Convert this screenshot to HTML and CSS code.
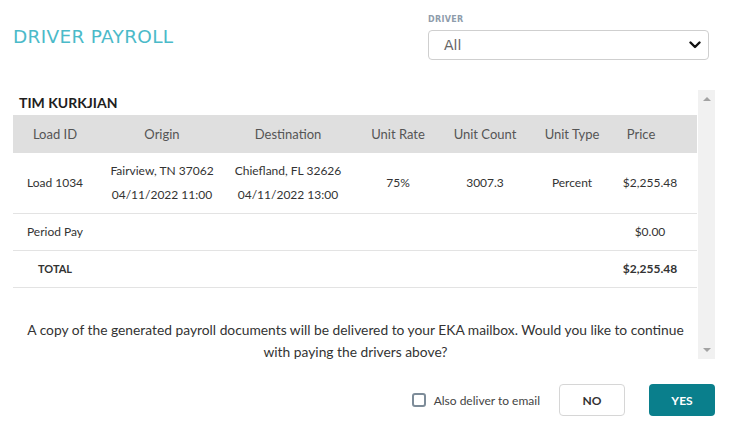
FILE: index.html
```html
<!DOCTYPE html>
<html>
<head>
    <title>Driver Payroll</title>
    <link rel="stylesheet" href="styles.css">
</head>
<body>
    <!-- Top bar -->
    <div class="topbar">
        <h1 class="title">DRIVER PAYROLL</h1>
        <div class="filter">
            <div class="filter-label">DRIVER</div>
            <div class="select">
                <span>All</span>
                <svg width="12" height="8" viewBox="0 0 12 8"><path d="M1.5 1.5 L6 6 L10.5 1.5" fill="none" stroke="#111" stroke-width="2.4" stroke-linecap="round" stroke-linejoin="round"/></svg>
            </div>
        </div>
    </div>

    <!-- Payroll panel -->
    <div class="panel">
        <div class="panel-content">
            <div class="driver-name">TIM KURKJIAN</div>
            <table class="payroll">
                <colgroup>
                    <col style="width:84px">
                    <col style="width:130px">
                    <col style="width:122px">
                    <col style="width:98px">
                    <col style="width:76px">
                    <col style="width:98px">
                    <col style="width:76px">
                </colgroup>
                <thead>
                    <tr>
                        <th>Load ID</th>
                        <th>Origin</th>
                        <th>Destination</th>
                        <th>Unit Rate</th>
                        <th>Unit Count</th>
                        <th>Unit Type</th>
                        <th class="price">Price</th>
                    </tr>
                </thead>
                <tbody>
                    <tr class="load-row">
                        <td>Load 1034</td>
                        <td>Fairview, TN 37062<br>04/11/2022 11:00</td>
                        <td>Chiefland, FL 32626<br>04/11/2022 13:00</td>
                        <td>75%</td>
                        <td>3007.3</td>
                        <td>Percent</td>
                        <td class="price">$2,255.48</td>
                    </tr>
                    <tr class="sum-row">
                        <td>Period Pay</td>
                        <td></td><td></td><td></td><td></td><td></td>
                        <td class="price">$0.00</td>
                    </tr>
                    <tr class="sum-row total">
                        <td>TOTAL</td>
                        <td></td><td></td><td></td><td></td><td></td>
                        <td class="price">$2,255.48</td>
                    </tr>
                </tbody>
            </table>
            <p class="message">A copy of the generated payroll documents will be delivered to your EKA mailbox. Would you like to continue with paying the drivers above?</p>
        </div>
        <div class="scrollbar">
            <span class="arrow-up"></span>
            <span class="arrow-down"></span>
        </div>
    </div>

    <!-- Actions -->
    <div class="actions">
        <label class="email-option">
            <span class="checkbox"></span>
            Also deliver to email
        </label>
        <button class="btn btn-no">NO</button>
        <button class="btn btn-yes">YES</button>
    </div>
</body>
</html>
```

FILE: styles.css
```css
body {
    font-family: Lato, "Liberation Sans", sans-serif;
    margin: 0;
    padding: 0;
    background-color: white;
    color: #333;
}
.topbar {
    display: flex;
    justify-content: space-between;
    padding: 15px 27px 0 13px;
    height: 75px;
}
.title {
    font-family: "DejaVu Sans", sans-serif;
    font-weight: normal;
    font-size: 18.5px;
    color: #4bbac9;
    margin: 11px 0 0 0;
    letter-spacing: 0.3px;
}
.filter {
    width: 281px;
}
.filter-label {
    font-family: "DejaVu Sans", sans-serif;
    font-size: 8px;
    font-weight: bold;
    color: #8e9cab;
    letter-spacing: 0.3px;
    height: 15px;
}
.select {
    display: flex;
    justify-content: space-between;
    align-items: center;
    height: 28px;
    border: 1px solid #cfcfcf;
    border-radius: 4px;
    padding: 0 7px 0 15px;
    font-family: "DejaVu Sans", sans-serif;
    font-size: 14px;
    color: #666;
}
/* Panel with table */
.panel {
    display: flex;
    margin-left: 13px;
    width: 702px;
    height: 269px;
}
.panel-content {
    flex: 1;
}
.driver-name {
    font-weight: bold;
    font-size: 14px;
    color: #1e1e1e;
    padding: 4px 6px 0;
    height: 21px;
}
.payroll {
    width: 684px;
    border-collapse: collapse;
    table-layout: fixed;
    font-size: 12px;
}
.payroll th {
    background-color: #dfdfdf;
    font-weight: normal;
    font-size: 13px;
    color: #555;
    height: 38px;
    padding: 0;
}
.payroll th.price {
    padding-right: 36px;
}
.payroll td {
    text-align: center;
    padding: 0;
    border-bottom: 1px solid #e3e3e3;
}
.payroll td.price {
    padding-right: 18px;
}
.load-row td {
    padding-top: 6px;
    padding-bottom: 6px;
    line-height: 24px;
}
.sum-row td {
    height: 34px;
    padding-bottom: 2px;
}
.total td {
    font-weight: bold;
    font-size: 11px;
}
.total td.price {
    font-size: 12px;
}
.message {
    margin: 0;
    padding: 31px 0 0;
    text-align: center;
    font-size: 13.8px;
    line-height: 22px;
    color: #333;
}
.scrollbar {
    width: 17px;
    background-color: #f1f1f1;
    display: flex;
    flex-direction: column;
    justify-content: space-between;
    align-items: center;
    padding: 7px 0;
    box-sizing: border-box;
}
.arrow-up, .arrow-down {
    width: 0;
    height: 0;
    border-left: 4px solid transparent;
    border-right: 4px solid transparent;
}
.arrow-up {
    border-bottom: 4px solid #a3a3a3;
}
.arrow-down {
    border-top: 4px solid #a3a3a3;
}
/* Footer actions */
.actions {
    display: flex;
    justify-content: flex-end;
    align-items: center;
    padding: 25px 21px 0 0;
}
.email-option {
    display: flex;
    align-items: center;
    font-size: 12px;
    color: #444;
    margin-right: 19px;
}
.checkbox {
    width: 10px;
    height: 10px;
    border: 2px solid #7d8c99;
    border-radius: 3px;
    margin-right: 8px;
}
.btn {
    width: 66px;
    height: 32px;
    border-radius: 4px;
    font-family: Lato, sans-serif;
    font-size: 12px;
    font-weight: bold;
    cursor: pointer;
}
.btn-no {
    background-color: white;
    border: 1px solid #d6d6d6;
    color: #333;
    margin-right: 24px;
}
.btn-yes {
    background-color: #0a7f8c;
    border: none;
    color: white;
}
```
